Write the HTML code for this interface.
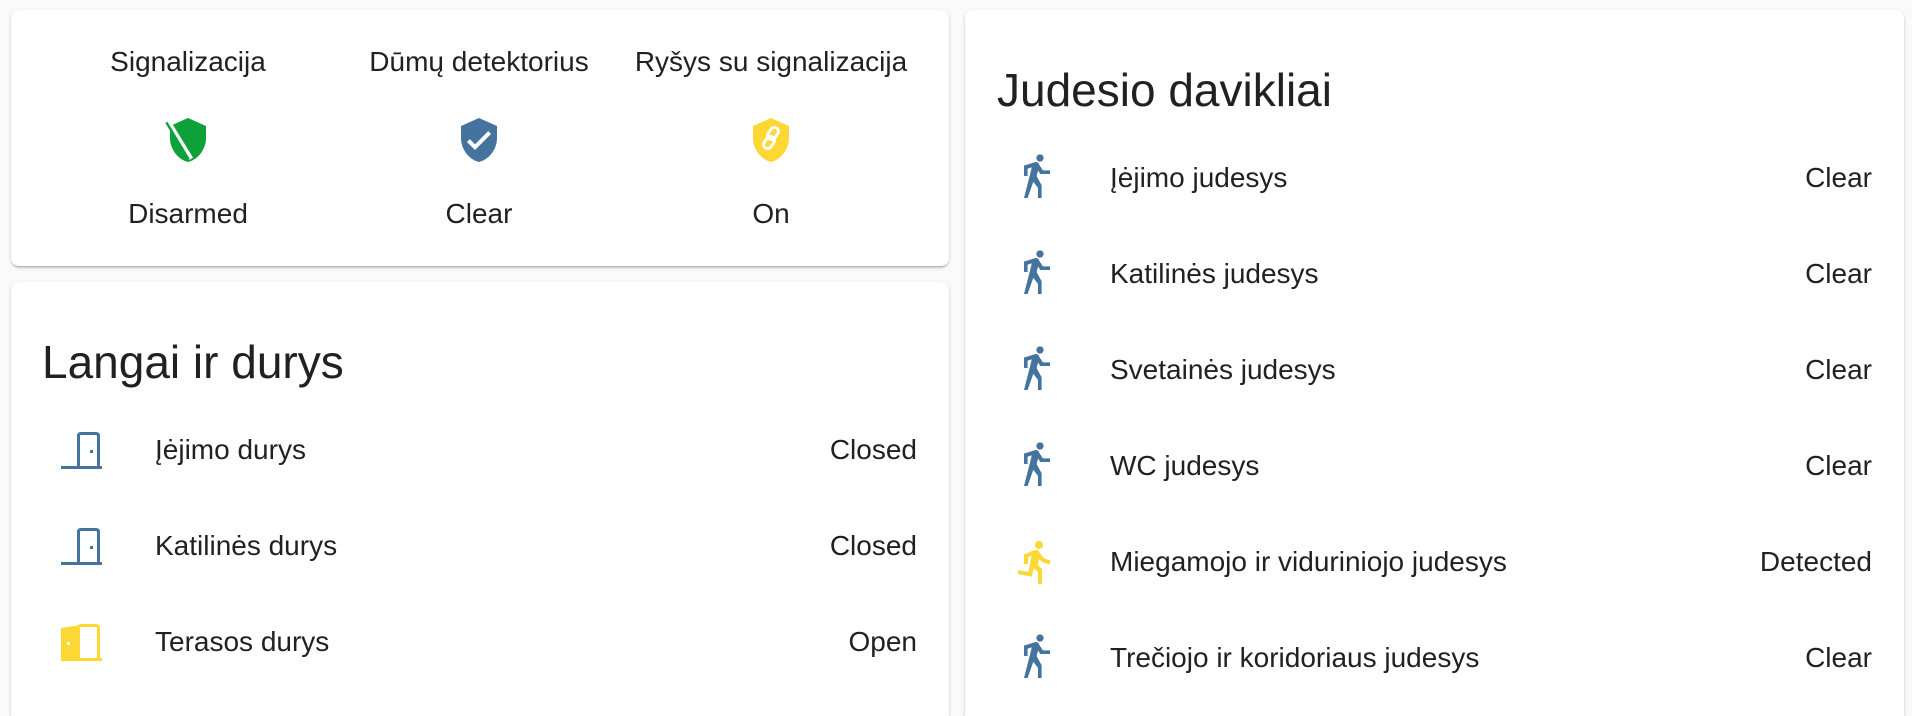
<!DOCTYPE html>
<html><head><meta charset="utf-8">
<style>
html,body{margin:0;padding:0;width:1912px;height:716px;overflow:hidden;}
body{background:#fafafa;position:relative;font-family:"Liberation Sans",Roboto,sans-serif;color:#212121;}
.card{position:absolute;background:#fff;border-radius:8px;box-shadow:0 2px 2px rgba(0,0,0,0.14),0 1px 5px rgba(0,0,0,0.10),0 3px 1px -2px rgba(0,0,0,0.12);}
.t{position:absolute;font-size:28px;line-height:34px;white-space:nowrap;}
.c{transform:translateX(-50%);}
.r{transform:translateX(-100%);}
.h{position:absolute;font-size:46px;line-height:56px;white-space:nowrap;}
svg{position:absolute;}
</style></head><body>

<div class="card" style="left:11px;top:10px;width:938px;height:256px;"></div>
<div class="card" style="left:11px;top:282px;width:938px;height:434px;border-radius:8px 8px 0 0;"></div>
<div class="card" style="left:965px;top:10px;width:939px;height:706px;border-radius:8px 8px 0 0;"></div>

<div class="t c" style="left:188px;top:45px;">Signalizacija</div>
<div class="t c" style="left:479px;top:45px;">Dūmų detektorius</div>
<div class="t c" style="left:771px;top:45px;">Ryšys su signalizacija</div>

<svg style="left:164px;top:116px" width="48" height="48" viewBox="0 0 24 24"><path fill="#0ea13a" d="M12,1L3,5V11C3,16.55 6.84,21.74 12,23C17.16,21.74 21,16.55 21,11V5L12,1Z"/><path d="M2.5,3.5L13.5,21.5" stroke="#fff" stroke-width="2.4"/><path d="M1.2,3.2L12.4,21.8" stroke="#0ea13a" stroke-width="1.2"/></svg>
<svg style="left:455px;top:116px" width="48" height="48" viewBox="0 0 24 24"><path fill="#44739e" d="M12,1L3,5V11C3,16.55 6.84,21.74 12,23C17.16,21.74 21,16.55 21,11V5L12,1M10,17L6,13L7.41,11.58L10,14.17L16.59,7.58L18,9L10,17Z"/></svg>
<svg style="left:747px;top:116px" width="48" height="48" viewBox="0 0 24 24"><path fill="#fdd835" d="M12,1L3,5V11C3,16.55 6.84,21.74 12,23C17.16,21.74 21,16.55 21,11V5L12,1Z"/><g fill="none" stroke="#fff" stroke-width="1.5"><rect x="11" y="5.5" width="4" height="6.5" rx="2" transform="rotate(35 13 8.75)"/><rect x="9" y="10" width="4" height="6.5" rx="2" transform="rotate(35 11 13.25)"/></g></svg>

<div class="t c" style="left:188px;top:197px;">Disarmed</div>
<div class="t c" style="left:479px;top:197px;">Clear</div>
<div class="t c" style="left:771px;top:197px;">On</div>

<div class="h" style="left:42px;top:334px;">Langai ir durys</div>

<svg style="left:58px;top:426px" width="48" height="48" viewBox="0 0 48 48"><rect x="3" y="40" width="41" height="3" fill="#44739e"/><path d="M20.5,41V10Q20.5,7.5 23,7.5H38Q40.5,7.5 40.5,10V41" fill="none" stroke="#44739e" stroke-width="3"/><rect x="32" y="24" width="3" height="3" fill="#44739e"/></svg>
<div class="t" style="left:155px;top:433px;">Įėjimo durys</div>
<div class="t r" style="left:917px;top:433px;">Closed</div>

<svg style="left:58px;top:522px" width="48" height="48" viewBox="0 0 48 48"><rect x="3" y="40" width="41" height="3" fill="#44739e"/><path d="M20.5,41V10Q20.5,7.5 23,7.5H38Q40.5,7.5 40.5,10V41" fill="none" stroke="#44739e" stroke-width="3"/><rect x="32" y="24" width="3" height="3" fill="#44739e"/></svg>
<div class="t" style="left:155px;top:529px;">Katilinės durys</div>
<div class="t r" style="left:917px;top:529px;">Closed</div>

<svg style="left:58px;top:618px" width="48" height="48" viewBox="0 0 48 48"><path d="M3,10L20,7.5V43H3Z" fill="#fdd835"/><rect x="3" y="40" width="41" height="3" fill="#fdd835"/><path d="M20.5,41V10Q20.5,7.5 23,7.5H38Q40.5,7.5 40.5,10V41" fill="none" stroke="#fdd835" stroke-width="3"/><rect x="9" y="24" width="3" height="3" fill="#fff"/></svg>
<div class="t" style="left:155px;top:625px;">Terasos durys</div>
<div class="t r" style="left:917px;top:625px;">Open</div>

<div class="h" style="left:997px;top:62px;">Judesio davikliai</div>

<svg style="left:1012px;top:154px" width="48" height="48" viewBox="0 0 24 24"><path fill="#44739e" d="M14.12,10H19V8.2H15.38L13.38,4.87C13.08,4.37 12.54,4.03 11.92,4.03C11.74,4.03 11.58,4.06 11.42,4.11L6,5.8V11H7.8V7.33L9.91,6.67L6,22H7.8L10.67,13.89L13,17V22H14.8V15.59L12.31,11.05L13.04,8.18M14,3.8C15,3.8 15.8,3 15.8,2C15.8,1 15,0.2 14,0.2C13,0.2 12.2,1 12.2,2C12.2,3 13,3.8 14,3.8Z"/></svg>
<div class="t" style="left:1110px;top:161px;">Įėjimo judesys</div>
<div class="t r" style="left:1872px;top:161px;">Clear</div>

<svg style="left:1012px;top:250px" width="48" height="48" viewBox="0 0 24 24"><path fill="#44739e" d="M14.12,10H19V8.2H15.38L13.38,4.87C13.08,4.37 12.54,4.03 11.92,4.03C11.74,4.03 11.58,4.06 11.42,4.11L6,5.8V11H7.8V7.33L9.91,6.67L6,22H7.8L10.67,13.89L13,17V22H14.8V15.59L12.31,11.05L13.04,8.18M14,3.8C15,3.8 15.8,3 15.8,2C15.8,1 15,0.2 14,0.2C13,0.2 12.2,1 12.2,2C12.2,3 13,3.8 14,3.8Z"/></svg>
<div class="t" style="left:1110px;top:257px;">Katilinės judesys</div>
<div class="t r" style="left:1872px;top:257px;">Clear</div>

<svg style="left:1012px;top:346px" width="48" height="48" viewBox="0 0 24 24"><path fill="#44739e" d="M14.12,10H19V8.2H15.38L13.38,4.87C13.08,4.37 12.54,4.03 11.92,4.03C11.74,4.03 11.58,4.06 11.42,4.11L6,5.8V11H7.8V7.33L9.91,6.67L6,22H7.8L10.67,13.89L13,17V22H14.8V15.59L12.31,11.05L13.04,8.18M14,3.8C15,3.8 15.8,3 15.8,2C15.8,1 15,0.2 14,0.2C13,0.2 12.2,1 12.2,2C12.2,3 13,3.8 14,3.8Z"/></svg>
<div class="t" style="left:1110px;top:353px;">Svetainės judesys</div>
<div class="t r" style="left:1872px;top:353px;">Clear</div>

<svg style="left:1012px;top:442px" width="48" height="48" viewBox="0 0 24 24"><path fill="#44739e" d="M14.12,10H19V8.2H15.38L13.38,4.87C13.08,4.37 12.54,4.03 11.92,4.03C11.74,4.03 11.58,4.06 11.42,4.11L6,5.8V11H7.8V7.33L9.91,6.67L6,22H7.8L10.67,13.89L13,17V22H14.8V15.59L12.31,11.05L13.04,8.18M14,3.8C15,3.8 15.8,3 15.8,2C15.8,1 15,0.2 14,0.2C13,0.2 12.2,1 12.2,2C12.2,3 13,3.8 14,3.8Z"/></svg>
<div class="t" style="left:1110px;top:449px;">WC judesys</div>
<div class="t r" style="left:1872px;top:449px;">Clear</div>

<svg style="left:1012px;top:538px" width="48" height="48" viewBox="0 0 24 24"><path fill="#fdd835" d="M13.5,5.5C14.59,5.5 15.5,4.58 15.5,3.5C15.5,2.38 14.59,1.5 13.5,1.5C12.39,1.5 11.5,2.38 11.5,3.5C11.5,4.58 12.39,5.5 13.5,5.5M9.89,19.38L10.89,15L13,17V23H15V15.5L12.89,13.5L13.5,10.5C14.79,12 16.79,13 19,13V11C17.09,11 15.5,10 14.69,8.58L13.69,7C13.29,6.38 12.69,6 12,6C11.690,6 11.5,6.08 11.19,6.08L6,8.28V13H8V9.58L9.79,8.88L8.19,17L3.29,16L2.89,18L9.89,19.38Z"/></svg>
<div class="t" style="left:1110px;top:545px;">Miegamojo ir viduriniojo judesys</div>
<div class="t r" style="left:1872px;top:545px;">Detected</div>

<svg style="left:1012px;top:634px" width="48" height="48" viewBox="0 0 24 24"><path fill="#44739e" d="M14.12,10H19V8.2H15.38L13.38,4.87C13.08,4.37 12.54,4.03 11.92,4.03C11.74,4.03 11.58,4.06 11.42,4.11L6,5.8V11H7.8V7.33L9.91,6.67L6,22H7.8L10.67,13.89L13,17V22H14.8V15.59L12.31,11.05L13.04,8.18M14,3.8C15,3.8 15.8,3 15.8,2C15.8,1 15,0.2 14,0.2C13,0.2 12.2,1 12.2,2C12.2,3 13,3.8 14,3.8Z"/></svg>
<div class="t" style="left:1110px;top:641px;">Trečiojo ir koridoriaus judesys</div>
<div class="t r" style="left:1872px;top:641px;">Clear</div>

</body></html>
